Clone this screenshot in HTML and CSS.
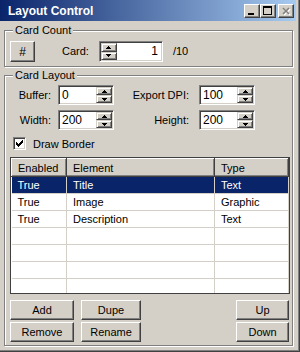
FILE: index.html
```html
<!DOCTYPE html>
<html>
<head>
  <title>Layout Control</title>
  <link rel="stylesheet" href="styles.css">
</head>
<body>
<div class="window">
  <div class="titlebar">
    <span class="title">Layout Control</span>
    <div class="caption-buttons">
      <span class="cap-btn"><svg width="14" height="12"><rect x="3" y="8" width="6" height="2" fill="#000"/></svg></span>
      <span class="cap-btn"><svg width="14" height="12"><path d="M2 1h9v9h-9z M3 3v6h7v-6z" fill="#000" fill-rule="evenodd"/></svg></span>
      <span class="cap-btn close"><svg width="14" height="12"><path d="M4 3l6 6M10 3l-6 6" stroke="#fff" stroke-width="1.6" transform="translate(1,1)"/><path d="M4 3l6 6M10 3l-6 6" stroke="#808080" stroke-width="1.6"/></svg></span>
    </div>
  </div>
  <div class="client">
    <div class="group count-group">
      <span class="group-title">Card Count</span>
      <button class="btn hash-btn">#</button>
      <span class="card-label">Card:</span>
      <div class="spin spin-left card-spin">
        <div class="spin-btns">
          <span class="spin-btn"><svg width="5" height="3"><rect x="2" y="0" width="1" height="1"/><rect x="1" y="1" width="3" height="1"/><rect x="0" y="2" width="5" height="1"/></svg></span>
          <span class="spin-btn"><svg width="5" height="3"><rect x="0" y="0" width="5" height="1"/><rect x="1" y="1" width="3" height="1"/><rect x="2" y="2" width="1" height="1"/></svg></span>
        </div>
        <span class="spin-text right">1</span>
      </div>
      <span class="card-total">/10</span>
    </div>

    <div class="group layout-group">
      <span class="group-title">Card Layout</span>
      <div class="field-row">
        <span class="lbl lbl-a">Buffer:</span>
        <div class="spin">
          <span class="spin-text">0</span>
          <div class="spin-btns">
            <span class="spin-btn"><svg width="5" height="3"><rect x="2" y="0" width="1" height="1"/><rect x="1" y="1" width="3" height="1"/><rect x="0" y="2" width="5" height="1"/></svg></span>
            <span class="spin-btn"><svg width="5" height="3"><rect x="0" y="0" width="5" height="1"/><rect x="1" y="1" width="3" height="1"/><rect x="2" y="2" width="1" height="1"/></svg></span>
          </div>
        </div>
        <span class="lbl lbl-b">Export DPI:</span>
        <div class="spin">
          <span class="spin-text">100</span>
          <div class="spin-btns">
            <span class="spin-btn"><svg width="5" height="3"><rect x="2" y="0" width="1" height="1"/><rect x="1" y="1" width="3" height="1"/><rect x="0" y="2" width="5" height="1"/></svg></span>
            <span class="spin-btn"><svg width="5" height="3"><rect x="0" y="0" width="5" height="1"/><rect x="1" y="1" width="3" height="1"/><rect x="2" y="2" width="1" height="1"/></svg></span>
          </div>
        </div>
      </div>
      <div class="field-row">
        <span class="lbl lbl-a">Width:</span>
        <div class="spin">
          <span class="spin-text">200</span>
          <div class="spin-btns">
            <span class="spin-btn"><svg width="5" height="3"><rect x="2" y="0" width="1" height="1"/><rect x="1" y="1" width="3" height="1"/><rect x="0" y="2" width="5" height="1"/></svg></span>
            <span class="spin-btn"><svg width="5" height="3"><rect x="0" y="0" width="5" height="1"/><rect x="1" y="1" width="3" height="1"/><rect x="2" y="2" width="1" height="1"/></svg></span>
          </div>
        </div>
        <span class="lbl lbl-b">Height:</span>
        <div class="spin">
          <span class="spin-text">200</span>
          <div class="spin-btns">
            <span class="spin-btn"><svg width="5" height="3"><rect x="2" y="0" width="1" height="1"/><rect x="1" y="1" width="3" height="1"/><rect x="0" y="2" width="5" height="1"/></svg></span>
            <span class="spin-btn"><svg width="5" height="3"><rect x="0" y="0" width="5" height="1"/><rect x="1" y="1" width="3" height="1"/><rect x="2" y="2" width="1" height="1"/></svg></span>
          </div>
        </div>
      </div>
      <div class="check-row">
        <span class="checkbox"><svg width="7" height="7"><rect x="0" y="2" width="1" height="3"/><rect x="1" y="3" width="1" height="3"/><rect x="2" y="4" width="1" height="3"/><rect x="3" y="3" width="1" height="3"/><rect x="4" y="2" width="1" height="3"/><rect x="5" y="1" width="1" height="3"/><rect x="6" y="0" width="1" height="3"/></svg></span>
        <span>Draw Border</span>
      </div>

      <div class="list">
        <table class="list-table">
          <thead>
            <tr><th class="col-enabled">Enabled</th><th class="col-element">Element</th><th class="col-type">Type</th></tr>
          </thead>
          <tbody>
            <tr class="selected"><td>True</td><td>Title</td><td>Text</td></tr>
            <tr><td>True</td><td>Image</td><td>Graphic</td></tr>
            <tr><td>True</td><td>Description</td><td>Text</td></tr>
            <tr><td></td><td></td><td></td></tr>
            <tr><td></td><td></td><td></td></tr>
            <tr><td></td><td></td><td></td></tr>
            <tr><td></td><td></td><td></td></tr>
          </tbody>
        </table>
      </div>

      <div class="button-bar">
        <div class="btn-col col-a">
          <button class="btn">Add</button>
          <button class="btn">Remove</button>
        </div>
        <div class="btn-col col-b">
          <button class="btn">Dupe</button>
          <button class="btn">Rename</button>
        </div>
        <div class="btn-col col-c">
          <button class="btn">Up</button>
          <button class="btn">Down</button>
        </div>
      </div>
    </div>
  </div>
</div>
</body>
</html>
```

FILE: styles.css
```css
body {
  margin: 0;
  background-color: #d4d0c8;
  font-family: "Liberation Sans", Arial, sans-serif;
  font-size: 11px;
  color: #000;
}

.window {
  width: 300px;
  height: 352px;
  box-sizing: border-box;
  border-right: 1px solid #404040;
  border-bottom: 1px solid #404040;
  box-shadow: inset -1px -1px #808080;
  padding: 0 3px 3px 0;
  display: flex;
  flex-direction: column;
}

.titlebar {
  height: 21px;
  flex: none;
  display: flex;
  align-items: center;
  justify-content: space-between;
  padding: 0 2px 0 8px;
  background: linear-gradient(to right, #0a246a, #a6caf0);
}

.title {
  color: #fff;
  font-weight: bold;
  font-size: 12px;
}

.caption-buttons {
  display: flex;
}

.cap-btn {
  width: 16px;
  height: 14px;
  box-sizing: border-box;
  background-color: #d4d0c8;
  border: 1px solid;
  border-color: #fff #404040 #404040 #fff;
  box-shadow: inset -1px -1px #808080;
  display: block;
}

.cap-btn svg {
  display: block;
}

.cap-btn.close {
  margin-left: 2px;
}

.client {
  flex: 1;
  padding: 9px 3px 0 4px;
}

/* etched group box */
.group {
  position: relative;
  box-sizing: border-box;
  border: 1px solid #808080;
  box-shadow: inset 1px 1px #fff, 1px 1px #fff;
}

.group-title {
  position: absolute;
  top: -7px;
  left: 8px;
  padding: 0 2px;
  line-height: 13px;
  background-color: #d4d0c8;
}

.count-group {
  height: 37px;
  padding: 10px 0 0 5px;
  display: flex;
  align-items: flex-start;
}

.layout-group {
  margin-top: 8px;
  height: 271px;
  padding: 9px 0 0 0;
}

.btn {
  box-sizing: border-box;
  height: 20px;
  padding: 0;
  background-color: #d4d0c8;
  border: 1px solid;
  border-color: #fff #404040 #404040 #fff;
  box-shadow: inset -1px -1px #808080;
  font-family: "Liberation Sans", Arial, sans-serif;
  font-size: 11px;
  color: #000;
}

.hash-btn {
  width: 25px;
  height: 21px;
  font-size: 12px;
}

.card-label {
  margin-left: 27px;
  line-height: 21px;
}

.card-total {
  margin-left: 10px;
  line-height: 21px;
}

/* up-down edit */
.spin {
  box-sizing: border-box;
  width: 56px;
  height: 20px;
  padding: 1px;
  display: flex;
  background-color: #fff;
  border: 1px solid;
  border-color: #808080 #fff #fff #808080;
  box-shadow: inset 1px 1px #404040, inset -1px -1px #d4d0c8;
}

.card-spin {
  width: 64px;
  height: 21px;
  margin-left: 10px;
}

.spin-text {
  flex: 1;
  padding-left: 2px;
  line-height: 16px;
  font-size: 12px;
}

.spin-text.right {
  text-align: right;
  padding: 0 3px 0 0;
}

.spin-btns {
  width: 16px;
  display: flex;
  flex-direction: column;
}

.spin-btn {
  flex: 1;
  box-sizing: border-box;
  background-color: #d4d0c8;
  border: 1px solid;
  border-color: #d4d0c8 #404040 #404040 #d4d0c8;
  box-shadow: inset 1px 1px #fff, inset -1px -1px #808080;
  display: flex;
  align-items: center;
  justify-content: center;
}

.spin-btn svg {
  display: block;
}

.field-row {
  display: flex;
  align-items: center;
  height: 20px;
  margin-bottom: 5px;
}

.lbl {
  text-align: right;
}

.lbl-a {
  width: 46px;
  margin-right: 7px;
}

.lbl-b {
  width: 75px;
  margin-right: 10px;
}

.check-row {
  display: flex;
  align-items: center;
  height: 13px;
  margin: 7px 0 7px 8px;
}

.checkbox {
  box-sizing: border-box;
  width: 13px;
  height: 13px;
  margin-right: 7px;
  padding: 2px;
  background-color: #fff;
  border: 1px solid;
  border-color: #808080 #fff #fff #808080;
  box-shadow: inset 1px 1px #404040, inset -1px -1px #d4d0c8;
  display: flex;
  align-items: center;
  justify-content: center;
}

.checkbox svg {
  display: block;
}

/* list view */
.list {
  box-sizing: border-box;
  width: 280px;
  height: 137px;
  margin-left: 5px;
  overflow: hidden;
  background-color: #fff;
  border: 1px solid #404040;
}

.list-table {
  border-collapse: collapse;
  table-layout: fixed;
  width: 277px;
}

.list-table th {
  box-sizing: border-box;
  height: 18px;
  padding: 0 0 0 6px;
  text-align: left;
  font-weight: normal;
  background-color: #d4d0c8;
  border: 1px solid;
  border-color: #fff #404040 #404040 #fff;
  box-shadow: inset -1px -1px #808080;
}

.col-enabled {
  width: 55px;
}

.col-element {
  width: 148px;
}

.col-type {
  width: 74px;
}

.list-table td {
  height: 16px;
  padding: 0 0 0 6px;
  border-right: 1px solid #d4d0c8;
  border-bottom: 1px solid #d4d0c8;
  line-height: 16px;
}

.list-table tr.selected td {
  background-color: #0a246a;
  color: #fff;
}

.button-bar {
  display: flex;
  margin: 6px 0 0 5px;
}

.btn-col {
  display: flex;
  flex-direction: column;
  gap: 2px;
}

.col-a {
  width: 64px;
}

.col-b {
  width: 60px;
  margin-left: 7px;
}

.col-c {
  width: 53px;
  margin-left: auto;
  margin-right: 3px;
}
```
